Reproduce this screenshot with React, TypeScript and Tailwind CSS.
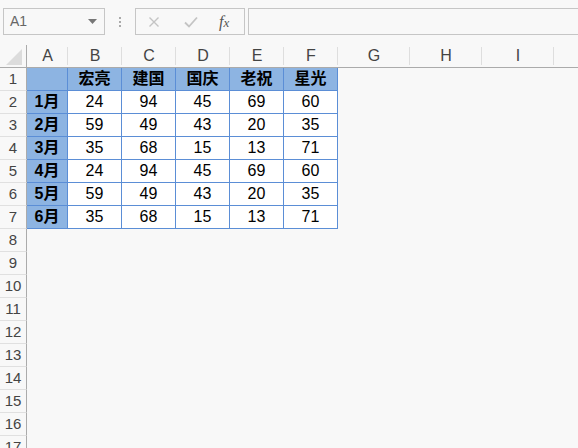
import React from 'react';

const colWidths = [41, 54, 54, 54, 54, 54, 72, 72, 72];
const letters = ['A', 'B', 'C', 'D', 'E', 'F', 'G', 'H', 'I'];
const names = ['宏亮', '建国', '国庆', '老祝', '星光'];
const data = [
  [24, 94, 45, 69, 60],
  [59, 49, 43, 20, 35],
  [35, 68, 15, 13, 71],
  [24, 94, 45, 69, 60],
  [59, 49, 43, 20, 35],
  [35, 68, 15, 13, 71],
];

const font = { fontFamily: '"Liberation Sans", Arial, "Noto Sans CJK SC", sans-serif' };

const FormulaBar: React.FC = () => (
  <div className="flex items-center h-[45px] pl-[3px] pb-[2px]">
    <div className="flex items-center justify-between w-[102px] h-[27px] border border-[#c6c6c6] px-[6px]">
      <span className="text-[14px] text-[#666]">A1</span>
      <svg width="9" height="5" viewBox="0 0 9 5" className="mr-[1px]">
        <path d="M0 0h9L4.5 5z" fill="#777" />
      </svg>
    </div>
    <div className="w-[30px] flex flex-col items-center gap-[2px]">
      <span className="w-[2px] h-[2px] bg-[#aaa]" />
      <span className="w-[2px] h-[2px] bg-[#aaa]" />
      <span className="w-[2px] h-[2px] bg-[#aaa]" />
    </div>
    <div className="flex items-center w-[110px] h-[27px] border border-[#c6c6c6]">
      <svg width="12" height="12" viewBox="0 0 12 12" className="ml-[12px]">
        <path d="M1.5 1.5l9 9M10.5 1.5l-9 9" stroke="#c4c4c4" strokeWidth="1.4" />
      </svg>
      <svg width="14" height="12" viewBox="0 0 14 12" className="ml-[24px]">
        <path d="M1 6.5l4 4L13 1.5" stroke="#c4c4c4" strokeWidth="1.8" fill="none" />
      </svg>
      <span
        className="ml-[21px] text-[16px] italic text-[#555] leading-none"
        style={{ fontFamily: '"Liberation Serif", "Times New Roman", serif' }}
      >
        f<span className="text-[13px]">x</span>
      </span>
    </div>
    <div className="flex-1 h-[27px] ml-[3px] border border-[#c6c6c6] border-r-0" />
  </div>
);

export default function App() {
  const gridCols = `27px ${colWidths.map((w) => w + 'px').join(' ')} 1fr`;
  const rows = Array.from({ length: 17 }, (_, i) => i + 1);

  const cellContent = (r: number, c: number) => {
    // r: 1-based row, c: 0-based column (A=0)
    if (r === 1 && c >= 1 && c <= 5) return names[c - 1];
    if (r >= 2 && r <= 7 && c === 0) return `${r - 1}月`;
    if (r >= 2 && r <= 7 && c >= 1 && c <= 5) return data[r - 2][c - 1];
    return '';
  };

  return (
    <div className="w-[578px] h-[448px] overflow-hidden bg-[#f8f8f8]" style={font}>
      <FormulaBar />
      <div className="grid" style={{ gridTemplateColumns: gridCols, gridAutoRows: '23px' }}>
        {/* column header row */}
        <div className="border-r border-b border-[#ababab] flex items-end justify-end">
          <svg width="16" height="16" viewBox="0 0 16 16" className="mb-[2px] mr-[4px]">
            <path d="M16 0V16H0z" fill="#dcdcdc" />
          </svg>
        </div>
        {letters.map((l) => (
          <div
            key={l}
            className="border-b border-[#ababab] relative flex items-center justify-center text-[16px] text-[#444]"
          >
            {l}
            <span className="absolute right-0 top-[2px] bottom-[2px] w-px bg-[#dedede]" />
          </div>
        ))}
        <div className="border-b border-[#ababab]" />

        {rows.map((r) => (
          <React.Fragment key={r}>
            <div className="border-r border-[#ababab] border-b border-b-[#e0e0e0] flex items-center justify-center text-[15px] text-[#444]">
              {r}
            </div>
            {letters.map((_, c) => {
              const inTable = r <= 7 && c <= 5;
              const isHead = inTable && (r === 1 || c === 0);
              const content = cellContent(r, c);
              return (
                <div
                  key={c}
                  className={
                    inTable
                      ? `border-r border-b border-[#5b8ed6] flex items-center justify-center text-[16px] text-black ${
                          isHead ? 'bg-[#8db4e2] font-bold' : 'bg-white'
                        }`
                      : ''
                  }
                >
                  {content}
                </div>
              );
            })}
            <div />
          </React.Fragment>
        ))}
      </div>
    </div>
  );
}
